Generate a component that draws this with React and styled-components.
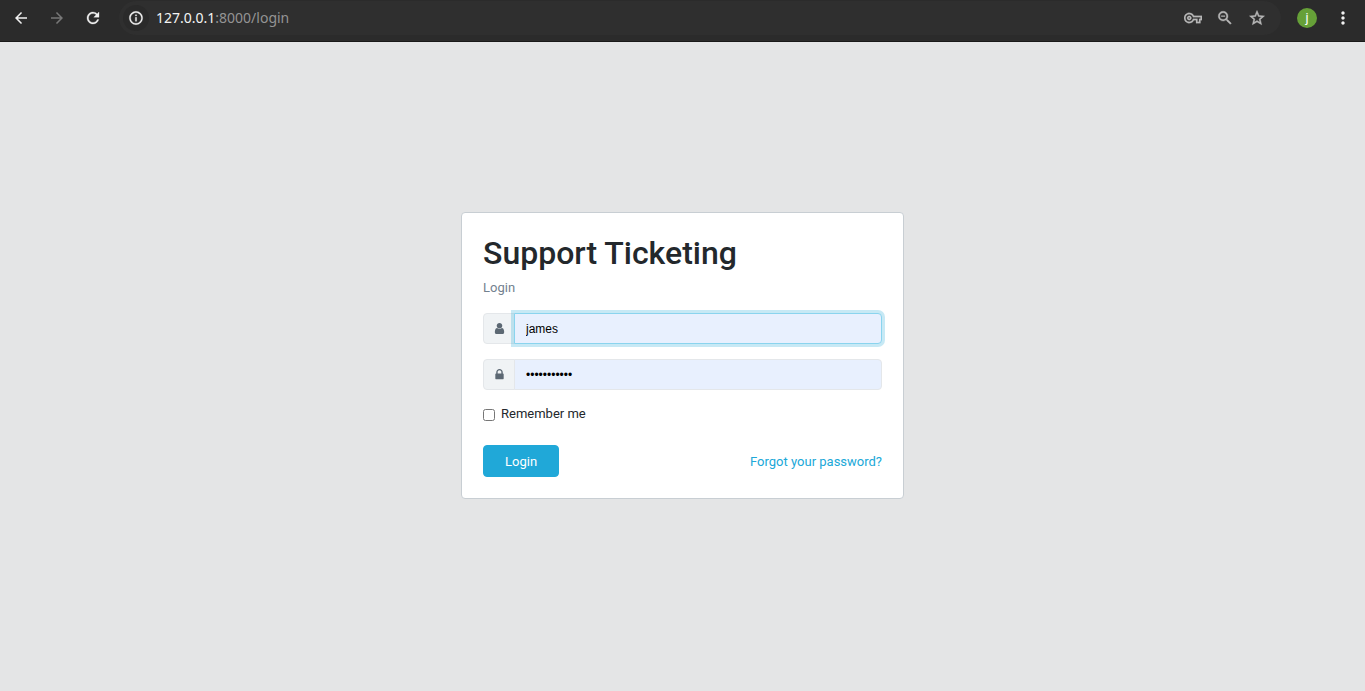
import React from "react";
import styled, { createGlobalStyle } from "styled-components";
import {
  MdArrowBack,
  MdArrowForward,
  MdRefresh,
  MdInfoOutline,
  MdOutlineVpnKey,
  MdZoomOut,
  MdStarBorder,
  MdMoreVert,
} from "react-icons/md";

const GlobalStyle = createGlobalStyle`
  *, *::before, *::after { box-sizing: border-box; }
  body {
    margin: 0;
    background: #e4e5e6;
    color: #23282c;
    font: 400 13px/17px Roboto, "Liberation Sans", sans-serif;
  }
`;

const Page = styled.div`
  display: flex;
  flex-direction: column;
  min-height: 100vh;
`;

const Toolbar = styled.header`
  display: flex;
  align-items: center;
  height: 42px;
  padding: 0 4px 6px 3px;
  background: #2b2b2b;
  border-bottom: 1px solid #191919;

  svg path[fill="none"] {
    stroke: none;
  }
`;

const ToolButton = styled.button`
  display: flex;
  align-items: center;
  justify-content: center;
  flex: none;
  width: ${(p) => p.$width || 36}px;
  height: 34px;
  padding: 0;
  border: 0;
  background: none;
  color: ${(p) => p.$color || "#f1f1f1"};
`;

const AddressBar = styled.div`
  display: flex;
  flex: 1;
  align-items: center;
  height: 34px;
  margin: 0 8px;
  padding: 0 8px 0 4px;
  border-radius: 17px;
  background: #2f2f2f;
`;

const SiteInfo = styled.button`
  display: flex;
  align-items: center;
  justify-content: center;
  width: 26px;
  height: 26px;
  padding: 0;
  border: 0;
  border-radius: 50%;
  background: #2a2a2a;
  color: #f1f1f1;
`;

const Address = styled.div`
  flex: 1;
  padding-left: 7px;
  color: #949494;
  font: 400 14px/20px "Noto Sans", "Open Sans", sans-serif;
`;

const Host = styled.span`
  color: #f4f4f4;
`;

const Avatar = styled.span`
  width: 20px;
  height: 20px;
  border-radius: 50%;
  background: #66a038;
  color: #fff;
  font: 400 13px/20px Roboto, sans-serif;
  text-align: center;
`;

const Main = styled.main`
  display: flex;
  flex: 1;
  align-items: center;
  justify-content: center;
  padding-bottom: 22px;
`;

const Card = styled.form`
  width: 100%;
  max-width: 443px;
  padding: 21px;
  border: 1px solid #c8ced3;
  border-radius: 4px;
  background: #fff;
`;

const Title = styled.h1`
  margin: 0 0 7px;
  font-size: 32px;
  font-weight: 500;
  line-height: 38px;
`;

const Subtitle = styled.p`
  margin: 0 0 17px;
  color: #73818f;
`;

const InputGroup = styled.div`
  display: flex;
  height: 31px;
  margin-bottom: 15px;
`;

const Addon = styled.label`
  display: flex;
  align-items: center;
  justify-content: center;
  width: 32px;
  border: 1px solid #e4e7ea;
  border-radius: 4px 0 0 4px;
  background: #f0f3f5;
  color: #5c6873;
`;

const TextInput = styled.input`
  flex: 1;
  min-width: 0;
  margin-left: -1px;
  padding: 2px 11px 0;
  border: 1px solid ${(p) => (p.$active ? "#8ad4ee" : "#e4e7ea")};
  border-radius: 0 4px 4px 0;
  outline: 0;
  background: #e8f0fe;
  box-shadow: ${(p) => (p.$active ? "0 0 0 3px rgba(32, 168, 216, 0.25)" : "none")};
  color: #000;
  font: 400 12px/19px "Liberation Sans", Arial, sans-serif;
`;

const Remember = styled.label`
  display: flex;
  align-items: center;
  width: fit-content;
  margin-bottom: 23px;
`;

const Checkbox = styled.input`
  width: 12px;
  height: 12px;
  margin: 2px 6px 0 0;
`;

const Actions = styled.div`
  display: flex;
  align-items: center;
  justify-content: space-between;
`;

const SubmitButton = styled.button`
  height: 32px;
  padding: 0 21px;
  border: 1px solid #20a8d8;
  border-radius: 4px;
  background: #20a8d8;
  color: #fff;
  font: inherit;
`;

const ForgotLink = styled.a`
  color: #20a8d8;
  text-decoration: none;
`;

const UserIcon = () => (
  <svg width="13" height="13" viewBox="0 0 1792 1792" fill="currentColor" aria-hidden="true">
    <path d="M1536 1399q0 109-62.5 187t-150.5 78h-854q-88 0-150.5-78t-62.5-187q0-85 8.5-160.5t31.5-152 58.5-131 94-89 134.5-34.5q131 128 313 128t313-128q76 0 134.5 34.5t94 89 58.5 131 31.5 152 8.5 160.5zm-256-887q0 159-112.5 271.5t-271.5 112.5-271.5-112.5-112.5-271.5 112.5-271.5 271.5-112.5 271.5 112.5 112.5 271.5z" />
  </svg>
);

const LockIcon = () => (
  <svg width="13" height="13" viewBox="0 0 1792 1792" fill="currentColor" aria-hidden="true">
    <path d="M640 768h512v-192q0-106-75-181t-181-75-181 75-75 181v192zm832 96v576q0 40-28 68t-68 28h-960q-40 0-68-28t-28-68v-576q0-40 28-68t68-28h32v-192q0-184 132-316t316-132 316 132 132 316v192h32q40 0 68 28t28 68z" />
  </svg>
);

export default function App() {
  return (
    <Page>
      <GlobalStyle />
      <Toolbar>
        <ToolButton type="button" aria-label="Back"><MdArrowBack size={18} /></ToolButton>
        <ToolButton type="button" aria-label="Forward" $color="#777"><MdArrowForward size={18} /></ToolButton>
        <ToolButton type="button" aria-label="Reload"><MdRefresh size={18} strokeWidth="0.4" /></ToolButton>
        <AddressBar>
          <SiteInfo type="button" aria-label="Site information"><MdInfoOutline size={16} strokeWidth="0.4" /></SiteInfo>
          <Address><Host>127.0.0.1</Host>:8000/login</Address>
          <ToolButton type="button" aria-label="Passwords" $width={32} $color="#b8b8b8"><MdOutlineVpnKey size={18} strokeWidth="0.3" /></ToolButton>
          <ToolButton type="button" aria-label="Zoom" $width={32} $color="#b8b8b8"><MdZoomOut size={18} strokeWidth="0.5" /></ToolButton>
          <ToolButton type="button" aria-label="Bookmark" $width={32} $color="#b8b8b8"><MdStarBorder size={18} strokeWidth="0.6" /></ToolButton>
        </AddressBar>
        <ToolButton type="button" aria-label="Profile"><Avatar>j</Avatar></ToolButton>
        <ToolButton type="button" aria-label="Menu"><MdMoreVert size={20} /></ToolButton>
      </Toolbar>
      <Main>
        <Card onSubmit={(e) => e.preventDefault()}>
          <Title>Support Ticketing</Title>
          <Subtitle>Login</Subtitle>
          <InputGroup>
            <Addon htmlFor="username" aria-label="Username"><UserIcon /></Addon>
            <TextInput id="username" type="text" defaultValue="james" $active />
          </InputGroup>
          <InputGroup>
            <Addon htmlFor="password" aria-label="Password"><LockIcon /></Addon>
            <TextInput id="password" type="password" defaultValue="password123" />
          </InputGroup>
          <Remember htmlFor="remember">
            <Checkbox id="remember" type="checkbox" />
            Remember me
          </Remember>
          <Actions>
            <SubmitButton type="submit">Login</SubmitButton>
            <ForgotLink href="#forgot">Forgot your password?</ForgotLink>
          </Actions>
        </Card>
      </Main>
    </Page>
  );
}
